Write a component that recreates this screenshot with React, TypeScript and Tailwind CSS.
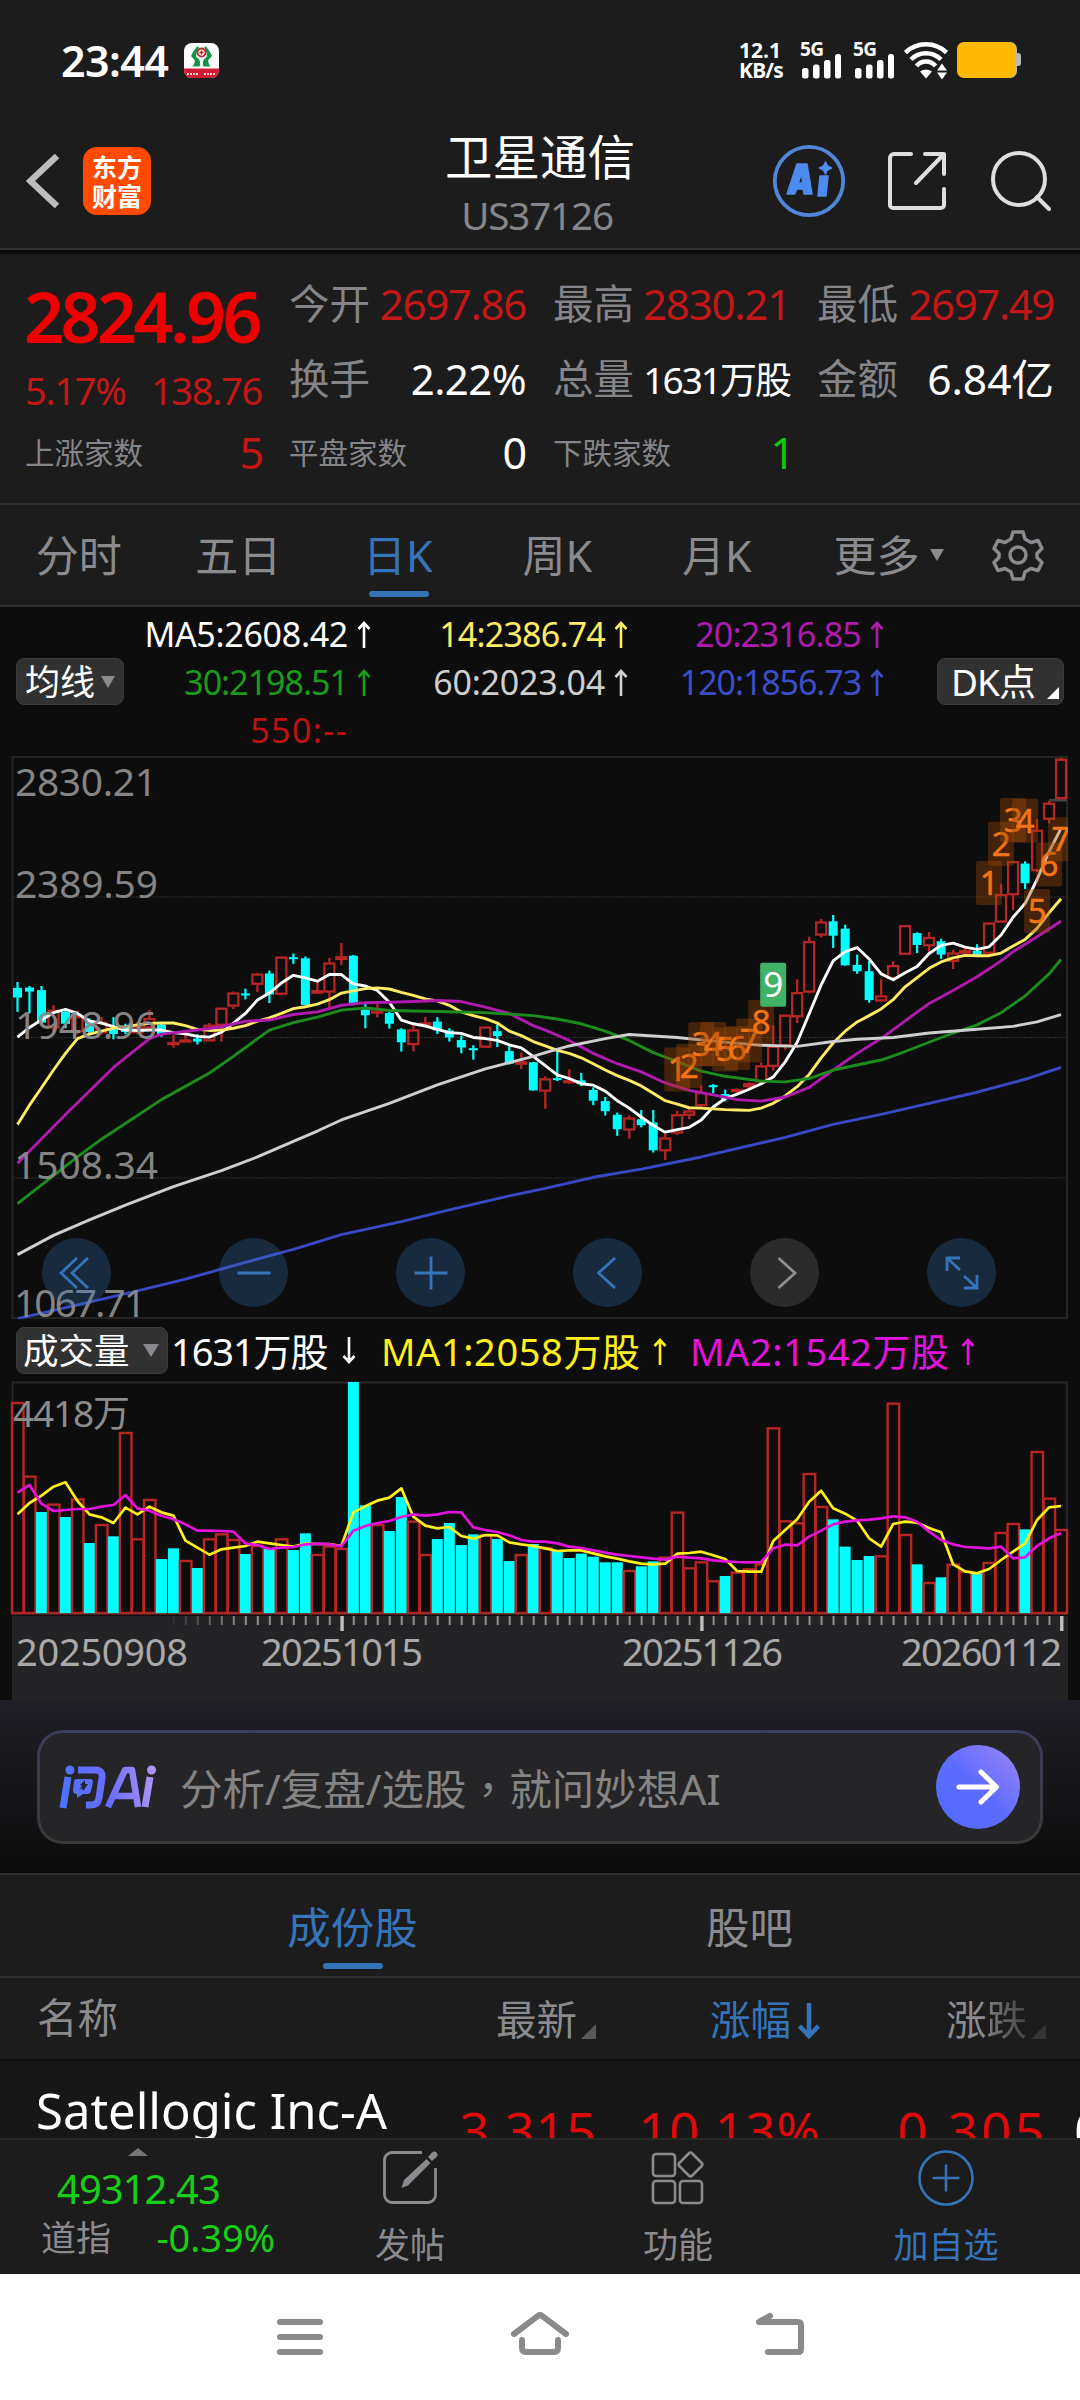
import { ReactNode } from "react";
import clsx from "clsx";

/* ---------- chart geometry ---------- */
const STEP = 11.995;
const cx = (i: number) => 17.5 + i * STEP;
const py = (v: number) => v / 2.703 - 6; // price pane, origin at 756
const vy = (v: number) => v / 3 - 61; // volume pane, origin at 1381

// [up, high, bodyTop, bodyBottom, low]
const CANDLES: number[][] = [
  [0, 627, 643, 669, 708], [0, 638, 642, 653, 712], [0, 638, 649, 737, 742], [1, 690, 703, 752, 762],
  [0, 700, 708, 740, 752], [1, 705, 720, 762, 768], [0, 725, 735, 762, 770], [1, 722, 735, 765, 770],
  [0, 722, 755, 768, 782], [0, 740, 748, 762, 768], [1, 735, 748, 765, 768], [1, 703, 725, 752, 758],
  [0, 738, 742, 768, 775], [1, 770, 790, 795, 805], [1, 765, 783, 786, 788], [0, 768, 780, 788, 796],
  [1, 738, 743, 787, 788], [1, 697, 697, 745, 788], [1, 653, 656, 693, 700], [0, 645, 658, 662, 674],
  [1, 603, 605, 634, 655], [0, 596, 604, 661, 684], [1, 558, 559, 661, 662], [0, 550, 560, 565, 578],
  [0, 558, 563, 689, 690], [1, 622, 650, 658, 660], [1, 562, 575, 655, 697], [1, 522, 558, 567, 582],
  [0, 554, 556, 689, 690], [0, 682, 702, 717, 752], [1, 683, 705, 708, 723], [0, 705, 711, 740, 753],
  [0, 752, 755, 790, 815], [1, 745, 756, 797, 815], [1, 722, 737, 743, 750], [0, 722, 734, 758, 768],
  [0, 752, 758, 777, 788], [0, 772, 784, 804, 820], [0, 798, 806, 809, 837], [1, 748, 748, 804, 806],
  [0, 742, 760, 773, 803], [0, 798, 814, 848, 850], [1, 818, 842, 850, 862], [0, 843, 844, 920, 921],
  [1, 882, 888, 923, 970], [0, 813, 887, 891, 895], [1, 863, 893, 900, 902], [0, 873, 893, 903, 908],
  [0, 912, 919, 948, 960], [0, 938, 949, 976, 988], [0, 980, 986, 1025, 1043], [1, 988, 994, 1028, 1050],
  [0, 973, 998, 1014, 1020], [0, 973, 1007, 1082, 1088], [1, 1038, 1048, 1084, 1108], [1, 975, 985, 1036, 1040],
  [1, 968, 975, 988, 998], [1, 907, 925, 962, 968], [0, 903, 906, 909, 928], [0, 918, 930, 943, 950],
  [1, 915, 917, 923, 930], [1, 898, 901, 911, 918], [1, 845, 853, 898, 905], [1, 743, 800, 856, 867],
  [1, 716, 716, 800, 810], [1, 620, 655, 722, 738], [1, 505, 517, 655, 658], [1, 457, 464, 501, 507],
  [0, 446, 463, 502, 535], [0, 472, 483, 582, 583], [0, 553, 581, 598, 605], [0, 570, 598, 676, 683],
  [1, 620, 664, 679, 680], [1, 570, 582, 618, 622], [1, 473, 474, 553, 554], [0, 493, 495, 527, 549],
  [1, 492, 506, 530, 545], [0, 510, 517, 553, 565], [1, 540, 548, 572, 592], [1, 535, 541, 550, 553],
  [0, 525, 543, 553, 560], [1, 467, 467, 550, 553], [1, 363, 390, 466, 467], [1, 301, 301, 392, 433],
  [0, 301, 307, 360, 376], [1, 187, 216, 327, 330], [1, 138, 143, 188, 199], [1, 20, 24, 132, 134],
];

const MA5 = [
  776, 750, 730, 710, 701, 712, 733, 738, 748, 757, 758, 757, 757, 764, 767, 774, 776, 763, 738, 712, 676, 657,
  630, 609, 616, 625, 607, 607, 632, 638, 650, 682, 730, 740, 746, 755, 764, 766, 777, 780, 785, 797, 805, 828,
  853, 878, 888, 902, 906, 922, 948, 968, 992, 1015, 1033, 1026, 1020, 1000, 965, 942, 930, 917, 902, 884, 843,
  790, 713, 635, 570, 545, 534, 565, 605, 621, 602, 585, 550, 528, 522, 533, 539, 532, 500, 452, 415, 350, 275, 212,
];
const MA14 = [
  1012, 960, 913, 865, 820, 780, 768, 760, 752, 748, 743, 739, 738, 738, 745, 755, 758, 757, 752, 745, 733, 724,
  712, 699, 694, 687, 675, 657, 651, 645, 643, 646, 655, 663, 673, 678, 690, 708, 718, 726, 738, 760, 772, 788,
  800, 812, 820, 832, 848, 865, 880, 893, 908, 928, 948, 957, 967, 968, 970, 972, 973, 974, 968, 955, 935, 910,
  877, 832, 792, 760, 735, 718, 700, 675, 640, 615, 590, 573, 562, 555, 556, 556, 549, 530, 512, 482, 440, 402,
];
const MA20 = [
  [0, 1117], [4, 985], [8, 858], [11, 780], [12, 768], [15, 757], [17, 748], [19, 733], [21, 730], [23, 715],
  [25, 708], [27, 690], [29, 683], [31, 682], [33, 680], [35, 677], [37, 680], [39, 695], [41, 712], [43, 745],
  [44, 757], [46, 785], [48, 820], [50, 848], [52, 870], [54, 900], [56, 920], [58, 932], [60, 945], [62, 949],
  [64, 938], [66, 912], [68, 865], [70, 820], [72, 780], [74, 732], [76, 685], [78, 650], [80, 613], [82, 570],
  [83, 545], [84, 525], [85, 505], [87, 462],
];
const MA30 = [
  [0, 1226], [5, 1100], [7, 1052], [12, 945], [16, 873], [18, 828], [21, 757], [23, 737], [25, 722], [27, 703],
  [29, 697], [31, 704], [35, 707], [39, 710], [43, 718], [45, 727], [47, 740], [49, 760], [51, 785], [53, 818],
  [55, 842], [57, 868], [59, 882], [62, 895], [64, 897], [66, 888], [68, 865], [72, 838], [74, 815], [76, 790],
  [78, 765], [80, 743], [82, 710], [84, 665], [86, 605], [87, 566],
];
const MA60 = [
  [0, 1364], [3, 1312], [6, 1270], [9, 1230], [13, 1180], [17, 1137], [20, 1100], [23, 1058], [25, 1030],
  [27, 1000], [31, 955], [35, 905], [39, 862], [43, 828], [44, 818], [46, 800], [49, 780], [51, 769], [55, 777],
  [58, 787], [62, 798], [65, 801], [68, 788], [70, 782], [73, 777], [76, 765], [80, 755], [83, 747], [85, 735],
  [87, 715],
];
const MA120 = [
  [0, 1537], [5, 1500], [10, 1462], [14, 1430], [19, 1385], [23, 1350], [27, 1310], [32, 1275], [36, 1243],
  [41, 1205], [44, 1185], [48, 1155], [52, 1133], [57, 1100], [64, 1047], [68, 1012], [72, 985], [76, 955],
  [80, 925], [84, 890], [87, 858],
];

const VOLUME = [
  246, 467, 576, 551, 591, 535, 669, 612, 649, 336, 655, 537, 717, 685, 720, 744, 655, 640, 657, 702, 675, 686,
  655, 690, 640, 702, 677, 684, 186, 556, 612, 633, 531, 602, 702, 657, 609, 675, 643, 643, 657, 723, 702, 672,
  681, 692, 714, 701, 710, 727, 727, 750, 739, 724, 710, 575, 742, 724, 781, 768, 755, 745, 730, 322, 601, 607,
  459, 558, 598, 680, 720, 708, 706, 248, 642, 733, 786, 772, 731, 752, 760, 726, 636, 609, 628, 393, 533, 627,
];
const FALLING = new Set([
  2, 4, 6, 8, 12, 13, 15, 19, 21, 23, 24, 28, 29, 31, 32, 35, 36, 37, 38, 40, 41, 43, 45, 46, 47, 48, 49, 50, 52,
  53, 59, 68, 69, 70, 71, 75, 77, 80, 84,
]);
const VMA1 = [
  583, 549, 527, 500, 487, 543, 583, 592, 609, 563, 583, 560, 577, 587, 662, 683, 704, 688, 683, 678, 665, 670,
  675, 680, 671, 672, 672, 678, 577, 559, 542, 533, 505, 590, 617, 625, 621, 648, 656, 645, 646, 667, 673, 678,
  685, 693, 691, 691, 700, 709, 716, 724, 731, 733, 731, 701, 699, 695, 706, 717, 753, 755, 755, 663, 630, 598,
  545, 512, 565, 581, 602, 655, 680, 612, 605, 608, 624, 637, 733, 754, 760, 747, 720, 695, 670, 600, 562, 558,
];
const VMA2 = [
  518, 495, 551, 573, 570, 567, 567, 560, 555, 525, 565, 572, 587, 598, 613, 632, 632, 633, 635, 670, 675, 687,
  683, 681, 673, 671, 673, 679, 632, 618, 609, 603, 591, 583, 587, 583, 576, 577, 622, 630, 636, 646, 660, 665,
  665, 670, 680, 684, 691, 698, 704, 708, 712, 716, 719, 710, 713, 715, 721, 724, 726, 727, 726, 685, 674, 676,
  650, 632, 613, 605, 601, 599, 595, 589, 592, 605, 635, 660, 673, 681, 683, 685, 680, 715, 712, 678, 655, 639,
];

// [candle index, box top, digit]
const MARKS: [number, number, string][] = [
  [55, 804, "1"], [56, 795, "2"], [57, 736, "3"], [58, 735, "4"], [59, 750, "5"], [60, 746, "6"], [61, 726, "7"],
  [62, 676, "8"], [81, 300, "1"], [82, 194, "2"], [83, 130, "3"], [84, 132, "4"], [85, 376, "5"],
  [86, 250, "6"], [87, 182, "7"],
];

const dense = (a: number[], y: (v: number) => number) => a.map((v, i) => `${cx(i)},${y(v)}`).join(" ");
const sparse = (a: number[][]) => a.map(([i, v]) => `${cx(i)},${py(v)}`).join(" ");

function AxisLabel({ x, y, w, children, fill = "#8c8c8c", size = 39 }: {
  x: number; y: number; w: number; children: string; fill?: string; size?: number;
}) {
  return (
    <text x={x} y={y} textLength={w} fill={fill} fontSize={size}>
      {children}
    </text>
  );
}

function PriceChart() {
  return (
    <svg width="1080" height="564" viewBox="0 0 1080 564" className="block">
      <defs>
        <clipPath id="pane">
          <rect x="12" y="0" width="1056" height="563" />
        </clipPath>
      </defs>
      <rect x="12.5" y="1" width="1054.5" height="561" fill="none" stroke="#242424" strokeWidth="2" />
      {[141, 281.5, 422].map((y) => (
        <line key={y} x1="13" x2="1067" y1={y} y2={y} stroke="#2e2e2e" strokeWidth="1" strokeDasharray="2 1" />
      ))}
      <g clipPath="url(#pane)">
        <rect x="1049" y="43" width="18" height="2.5" fill="#444" />
        {CANDLES.map(([up, h, t, b, l], i) => {
          const x = cx(i);
          const top = py(t);
          const bot = Math.max(py(b), top + 2);
          return up ? (
            <g key={i} stroke="#b82525" strokeWidth="2.3" fill="none">
              <path d={`M${x} ${py(h)}V${top}M${x} ${bot}V${py(l)}`} />
              <rect x={x - 5} y={top + 0.8} width="10" height={Math.max(bot - top - 1.6, 1)} />
            </g>
          ) : (
            <g key={i} fill="#00ffff">
              <rect x={x - 1.1} y={py(h)} width="2.2" height={py(l) - py(h)} />
              <rect x={x - 4.5} y={top} width="9" height={bot - top} />
            </g>
          );
        })}
        <g fill="none" strokeWidth="2.9" strokeLinejoin="round">
          <polyline points={dense(MA5, py)} stroke="#ffffff" />
          <polyline points={dense(MA14, py)} stroke="#ffec63" />
          <polyline points={sparse(MA20)} stroke="#b01aae" />
          <polyline points={sparse(MA30)} stroke="#1c8c1c" />
          <polyline points={sparse(MA60)} stroke="#cfcfcf" />
          <polyline points={sparse(MA120)} stroke="#3949c4" />
        </g>
        {MARKS.map(([i, top, n]) => (
          <g key={i}>
            <rect x={cx(i) - 13} y={py(top)} width="26" height="44" rx="2" fill="#9a4508" fillOpacity="0.4" />
            <text x={cx(i)} y={py(top) + 34} textAnchor="middle" fontSize="33" fill="#f47414" stroke="#f47414" strokeWidth="0.5">
              {n}
            </text>
          </g>
        ))}
        <rect x={cx(63) - 13} y={py(575)} width="26" height="44" rx="2" fill="#3fb268" />
        <text x={cx(63)} y={py(575) + 34.5} textAnchor="middle" fontSize="35" fill="#fff">
          9
        </text>
      </g>
      <g fillOpacity="0.95">
        <AxisLabel x={15} y={40} w={142}>2830.21</AxisLabel>
        <AxisLabel x={15} y={142} w={143}>2389.59</AxisLabel>
        <AxisLabel x={15} y={282.5} w={142}>1948.96</AxisLabel>
        <AxisLabel x={14} y={422.5} w={144}>1508.34</AxisLabel>
        <AxisLabel x={14} y={560.5} w={132}>1067.71</AxisLabel>
      </g>
    </svg>
  );
}

function VolumeChart() {
  return (
    <svg width="1080" height="319" viewBox="0 0 1080 319" className="block">
      <path d="M12.5 234V1.5H1067V234" fill="none" stroke="#262626" strokeWidth="2" />
      <rect x="12" y="235" width="1056" height="84" fill="#242426" />
      {VOLUME.map((v, i) =>
        FALLING.has(i) ? (
          <rect key={i} x={cx(i) - 5.5} y={vy(v)} width="11" height={232.5 - vy(v)} fill="#00ffff" />
        ) : (
          <rect
            key={i}
            x={cx(i) - 5.5}
            y={vy(v) + 1}
            width="11.5"
            height={231 - vy(v)}
            fill="none"
            stroke="#b82525"
            strokeWidth="2.4"
          />
        )
      )}
      <rect x="12" y="232" width="1055" height="1.6" fill="#8f2f2f" fillOpacity="0.7" />
      <g fill="none" strokeWidth="2.7" strokeLinejoin="round">
        <polyline points={dense(VMA1, vy)} stroke="#ffef1f" />
        <polyline points={dense(VMA2, vy)} stroke="#e312dc" />
      </g>
      <AxisLabel x={13} y={45.5} w={117} size={37}>4418万</AxisLabel>
      {VOLUME.map((_, i) => {
        if (i < 13) return null;
        const major = i === 27 || i === 57 || i === 87;
        return (
          <rect
            key={i}
            x={cx(i) - (major ? 1 : 0.6)}
            y="235"
            width={major ? 3.4 : 2}
            height={major ? 15 : 9}
            fill={major ? "#bdbdbd" : "#8f8f8f"}
            opacity={Math.min(1, (i - 12) / 7)}
          />
        );
      })}
      <AxisLabel x={16} y={285} w={172} fill="#a9a9a9" size={38}>20250908</AxisLabel>
      <AxisLabel x={261} y={285} w={162} fill="#a9a9a9" size={38}>20251015</AxisLabel>
      <AxisLabel x={622} y={285} w={161} fill="#a9a9a9" size={38}>20251126</AxisLabel>
      <AxisLabel x={901} y={285} w={161} fill="#a9a9a9" size={38}>20260112</AxisLabel>
    </svg>
  );
}

/* ---------- small pieces ---------- */
function Arrow({ down = false, className }: { down?: boolean; className?: string }) {
  return (
    <svg width="14" height="28" viewBox="0 0 14 28" className={clsx("shrink-0", down && "rotate-180", className)}>
      <path d="M7 28V3M1.5 9L7 3l5.5 6" fill="none" stroke="currentColor" strokeWidth="2.600" />
    </svg>
  );
}

function Signal() {
  return (
    <div className="ml-[12px] flex w-[41px] flex-col">
      <span className="text-[19px] leading-[14px] font-bold tracking-[-0.5px]">5G</span>
      <svg width="41" height="25" viewBox="0 0 41 25" className="mt-[-2px] block" fill="#fff">
        <rect x="2" y="14" width="6.5" height="10.500" rx="2.5" />
        <rect x="13" y="10.500" width="6.500" height="14" rx="2.5" />
        <rect x="24" y="6" width="6.500" height="18.500" rx="2.5" />
        <rect x="35" y="0" width="6" height="24.500" rx="2.5" />
      </svg>
    </div>
  );
}

function StatusBar() {
  return (
    <div className="flex h-[120px] items-center pr-[59px] pl-[61px] text-white">
      <span className="text-[43px] leading-none font-semibold tracking-[-0.6px]">23:44</span>
      <svg width="35" height="35" viewBox="0 0 35 35" className="ml-[16px]">
        <rect width="35" height="35" rx="8" fill="#fff" />
        <path d="M0 25.500H35V27a8 8 0 0 1-8 8H8a8 8 0 0 1-8-8z" fill="#d01c34" />
        <path d="M13 3.500Q9 8 7 13l4 4.500q-.500 4-2.500 6h7q2.500-5.500-3.500-10Q12 9 15 4zM22 3.500q4 4.500 6 9.500l-4 4.500q.5 4 2.500 6h-7q-2.500-5.500 3.500-10Q23 9 20 4z" fill="#0e9648" />
        <circle cx="17.500" cy="9.500" r="4" fill="#fff" stroke="#c8202c" strokeWidth="1.800" />
        <path d="M15.500 9.500h4M17.500 7.500v4" stroke="#c8202c" strokeWidth="1.500" />
        <path d="M3 31h11M20 31h12" stroke="#fff" strokeWidth="2" strokeDasharray="2 1" opacity="0.8" />
      </svg>
      <div className="ml-auto flex items-center">
        <div className="flex w-[49px] flex-col text-[21px] leading-[20px] font-bold">
          <span>12.1</span>
          <span className="tracking-[-0.8px]">KB/s</span>
        </div>
        <Signal />
        <Signal />
        <svg width="44" height="37" viewBox="0 0 44 37" className="ml-[10px]">
          <g fill="none" stroke="#fff" strokeWidth="4.500">
            <path d="M1.500 10.500C13-.5 31-.5 42.500 10.500" />
            <path d="M7 17.500C15 9 29 9 37 17.500" />
            <path d="M12.500 24C17.500 18 26.500 18 31.500 24" />
          </g>
          <path d="M16 29.500q6-4 12 0L22 36.500z" fill="#fff" />
          <path d="M33 28.500l5-7 5 7zM33 30.500h10l-5 7z" fill="#fff" />
        </svg>
        <svg width="64" height="36" viewBox="0 0 64 36" className="ml-[9px]">
          <path d="M50 0h3a7 7 0 0 1 7 7v4h1a3 3 0 0 1 3 3v7a3 3 0 0 1-3 3h-1v5a7 7 0 0 1-7 7h-3z" fill="#b9b9b9" />
          <rect width="58.500" height="36" rx="7" fill="#ffb800" />
        </svg>
      </div>
    </div>
  );
}

function Header() {
  return (
    <div className="grid h-[130px] grid-cols-[1fr_auto_1fr] border-b-2 border-[#333] pb-[6px]">
      <div className="flex items-center pl-[26px]">
        <svg width="34" height="56" viewBox="0 0 34 56">
          <path d="M31 3L4.500 28 31 53" fill="none" stroke="#bdbdbd" strokeWidth="6.500" />
        </svg>
        <div className="ml-[23px] flex h-[68px] w-[68px] flex-col items-center justify-center rounded-[14px] bg-[#ff4a00] font-['Noto_Sans_CJK_SC'] text-[25px] leading-[29px] font-bold text-white">
          <span>东方</span>
          <span>财富</span>
        </div>
      </div>
      <div className="flex flex-col items-center pt-[9px]">
        <h1 className="text-[47.5px] leading-[56px] text-white">卫星通信</h1>
        <span className="mt-[8px] pr-[6px] text-[38.5px] leading-[44px] tracking-[-1.1px] text-[#87878b]">US37126</span>
      </div>
      <div className="flex items-center justify-end pr-[29px]">
        <svg width="74" height="74" viewBox="0 0 74 74">
          <circle cx="37" cy="37" r="34.200" fill="none" stroke="#5085d8" strokeWidth="3.800" />
          <g fill="#4d8bf0" stroke="#4d8bf0" strokeWidth="1.500" strokeLinejoin="round">
            <path fillRule="evenodd" d="M25 20h10l5 30h-8l-.8-5h-6.500l-2 5H15zM29.500 29l-3.200 10h4.400z" />
            <path d="M48 32h8l-2 20h-8z" />
            <path d="M53.500 18l2 4 4 2-4 2-2 4-2-4-4-2 4-2z" />
          </g>
        </svg>
        <svg width="60" height="60" viewBox="0 0 60 60" className="ml-[42px]">
          <g fill="none" stroke="#dedede" strokeWidth="4" strokeLinecap="round" strokeLinejoin="round">
            <path d="M23 3H6a4 4 0 0 0-4 4v47a3 3 0 0 0 3 3h48a3 3 0 0 0 3-3V38" />
            <path d="M37 3h19v20M56 3L28 32" />
          </g>
        </svg>
        <svg width="60" height="60" viewBox="0 0 60 60" className="ml-[43px]">
          <g fill="none" stroke="#dedede" strokeWidth="4" strokeLinecap="round">
            <circle cx="28" cy="28" r="26" />
            <path d="M46 46l12 12" />
          </g>
        </svg>
      </div>
    </div>
  );
}

function Quote({ label, value, className }: { label: string; value: string; className: string }) {
  return (
    <div className="flex h-[60px] items-center justify-between whitespace-nowrap">
      <span className="text-[40.500px] leading-none text-[#858589]">{label}</span>
      <span className={clsx("leading-none", className)}>{value}</span>
    </div>
  );
}

function Count({ label, value, className }: { label: string; value: string; className: string }) {
  return (
    <div className="flex items-center justify-between">
      <span className="text-[29.5px] leading-none text-[#858589]">{label}</span>
      <span className={clsx("text-[43px] leading-none", className)}>{value}</span>
    </div>
  );
}

function Quotes() {
  return (
    <div className="h-[253px] border-t-4 border-[#0b0b0b] px-[25px] pt-[15px]">
      <div className="grid grid-cols-[237px_237px_237px_237px] gap-x-[27px]">
        <div className="flex h-[145px] flex-col whitespace-nowrap">
          <span className="mt-[7px] ml-[-1px] text-[70px] leading-[80px] font-semibold tracking-[-3.5px] text-[#ee0000]">2824.96</span>
          <div className="mt-[12px] flex justify-between text-[38px] leading-[44px] tracking-[-1.3px] text-[#c31616]">
            <span>5.17%</span>
            <span>138.76</span>
          </div>
        </div>
        <div className="flex flex-col gap-[15px] pt-[5px]">
          <Quote label="今开" value="2697.86" className="text-[42px] tracking-[-1.3px] text-[#c31616]" />
          <Quote label="换手" value="2.22%" className="text-[42px] tracking-[-0.6px] text-white" />
        </div>
        <div className="flex flex-col gap-[15px] pt-[5px]">
          <Quote label="最高" value="2830.21" className="text-[42px] tracking-[-1.2px] text-[#c31616]" />
          <Quote label="总量" value="1631万股" className="text-[37px] tracking-[-2px] text-white" />
        </div>
        <div className="flex flex-col gap-[15px] pt-[5px]">
          <Quote label="最低" value="2697.49" className="text-[42px] tracking-[-1.4px] text-[#c31616]" />
          <Quote label="金额" value="6.84亿" className="text-[42.500px] text-white" />
        </div>
      </div>
      <div className="mt-[17px] grid grid-cols-[237px_237px_237px_237px] gap-x-[27px]">
        <Count label="上涨家数" value="5" className="mr-[-2px] text-[#c31616]" />
        <Count label="平盘家数" value="0" className="mr-[-1px] text-white" />
        <Count label="下跌家数" value="1" className="mr-[-5px] text-[#0fc80f]" />
      </div>
    </div>
  );
}

function PeriodTabs() {
  return (
    <div className="flex h-[104px] border-t-2 border-b-2 border-[#2f2f2f] text-[43px] leading-none text-[#8b8b8f]">
      {["分时", "五日", "日K", "周K", "月K"].map((t) => (
        <div
          key={t}
          className={clsx("flex w-[159.5px] flex-col items-center pt-[29px]", t === "日K" && "text-[#3574b9]")}
        >
          <span className="pr-[2px]">{t}</span>
          {t === "日K" && <i className="mt-[14px] h-[6px] w-[60px] rounded-full bg-[#3574b9]" />}
        </div>
      ))}
      <div className="flex items-center pl-[36px]">
        <span>更多</span>
        <svg width="14" height="12" viewBox="0 0 14 12" className="ml-[10px]">
          <path d="M0 0h14L7 12z" fill="#8b8b8f" />
        </svg>
        <svg width="52" height="52" viewBox="0 0 52 52" className="ml-[48px]">
          <g fill="none" stroke="#8b8b8f" strokeWidth="3.500" strokeLinejoin="round">
            <path d="M21 3h10l2 7 6 3.500 7-2 4 8-5 5v4l5 5-4 8-7-2-6 3.500-2 7H21l-2-7-6-3.500-7 2-4-8 5-5v-4l-5-5 4-8 7 2 6-3.500z" />
            <circle cx="26" cy="26" r="8" />
          </g>
        </svg>
      </div>
    </div>
  );
}

function MaValue({ value, up = true, className }: { value: string; up?: boolean; className: string }) {
  return (
    <div className={clsx("flex h-[48px] items-center justify-end", className)}>
      <span>{value}</span>
      {up ? <Arrow className="mr-[3px] ml-[9px]" /> : <span className="w-[26px]" />}
    </div>
  );
}

function Averages() {
  return (
    <div className="flex h-[149px] pr-[16px] pl-[16px]">
      <div className="mt-[51px] flex h-[47px] w-[108px] items-center rounded-[8px] border border-[#3b3b3b] bg-[#313131] pl-[8px] text-[35px] leading-none text-white">
        均线
        <svg width="14" height="12" viewBox="0 0 14 12" className="ml-[6px]">
          <path d="M0 0h14L7 12z" fill="#8b8b8f" />
        </svg>
      </div>
      <div className="grid grid-cols-[250px_257px_256px] content-start pt-[3px] text-[34px] leading-none">
        <MaValue value="MA5:2608.42" className="tracking-[-0.3px] text-white" />
        <MaValue value="14:2386.74" className="tracking-[-0.8px] text-[#ffec63]" />
        <MaValue value="20:2316.85" className="tracking-[-0.8px] text-[#b01aae]" />
        <MaValue value="30:2198.51" className="tracking-[-1px] text-[#1c9a1c]" />
        <MaValue value="60:2023.04" className="tracking-[-0.2px] text-[#cfcfcf]" />
        <MaValue value="120:1856.73" className="tracking-[-1.1px] text-[#3c4dc8]" />
        <MaValue value="550:--" up={false} className="tracking-[1.4px] text-[#bd1212]" />
      </div>
      <div className="mt-[51px] ml-auto flex h-[47px] w-[127px] items-center rounded-[8px] border border-[#3b3b3b] bg-[#313131] pl-[13px] text-[37px] leading-none tracking-[-1px] text-white">
        DK点
        <svg width="12" height="12" viewBox="0 0 12 12" className="mt-[22px] ml-[12px]">
          <path d="M12 0v12H0z" fill="#fff" />
        </svg>
      </div>
    </div>
  );
}

function RoundButton({ children, muted = false }: { children: ReactNode; muted?: boolean }) {
  return (
    <button
      className={clsx(
        "flex h-[69px] w-[69px] items-center justify-center rounded-full",
        muted ? "bg-[#2b2b2b] text-[#8f8f8f]" : "bg-[#3578c0]/28 text-[#3574b9]"
      )}
    >
      <svg width="36" height="36" viewBox="0 0 36 36" fill="none" stroke="currentColor" strokeWidth="2.800">
        {children}
      </svg>
    </button>
  );
}

function PricePane() {
  return (
    <div className="relative h-[564px]">
      <PriceChart />
      <div className="absolute top-[482px] left-[42px] flex w-[954px] justify-between">
        <RoundButton>
          <path d="M18 3L2 18l16 15M29 3L13 18l16 15" />
        </RoundButton>
        <RoundButton>
          <path d="M1.500 18h33" />
        </RoundButton>
        <RoundButton>
          <path d="M1.500 18h33M18 1.500v33" />
        </RoundButton>
        <RoundButton>
          <path d="M25 3L8.500 18 25 33" />
        </RoundButton>
        <RoundButton muted>
          <path d="M11.500 3L28 18 11.500 33" />
        </RoundButton>
        <RoundButton>
          <path d="M3 16V3h13M3 3l13 12M33 20v13H20M33 33L20 21" />
        </RoundButton>
      </div>
    </div>
  );
}

function VolumeHeader() {
  return (
    <div className="flex h-[61px] items-center pl-[16px] text-[38px] leading-none whitespace-nowrap">
      <div className="flex h-[47px] w-[152px] items-center rounded-[8px] border border-[#3b3b3b] bg-[#313131] pl-[6px] text-[35.5px] text-white">
        成交量
        <svg width="16" height="13" viewBox="0 0 16 13" className="ml-[13px]">
          <path d="M0 0h16L8 13z" fill="#8b8b8f" />
        </svg>
      </div>
      <div className="flex w-[211px] items-center pl-[3px] tracking-[-1.1px] text-white">
        1631万股
        <Arrow down className="ml-[15px]" />
      </div>
      <div className="flex w-[310px] items-center pl-[2px] tracking-[0.6px] text-[#ffef1f]">
        MA1:2058万股
        <Arrow className="ml-[12px]" />
      </div>
      <div className="flex items-center pl-[1px] tracking-[0.6px] text-[#e312dc]">
        MA2:1542万股
        <Arrow className="ml-[11px]" />
      </div>
    </div>
  );
}

function AskBar() {
  return (
    <div className="h-[173px] bg-linear-to-b from-[#201f26] to-[#0c0c0c] px-[37px] pt-[30px]">
      <div className="h-[114px] rounded-[26px] bg-linear-to-b from-[#3b3d5c] to-[#3b3837] p-[3px]">
        <div className="flex h-full items-center rounded-[23px] bg-[#252527] pr-[20px] pl-[19px]">
          <svg width="98" height="44" viewBox="0 0 98 44">
            <defs>
              <linearGradient id="ask" gradientUnits="userSpaceOnUse" x1="0" y1="30" x2="98" y2="10">
                <stop offset="0" stopColor="#4a73ff" />
                <stop offset="0.5" stopColor="#6a6dff" />
                <stop offset="1" stopColor="#b597f5" />
              </linearGradient>
            </defs>
            <g fill="none" stroke="url(#ask)" strokeWidth="7" strokeLinejoin="round">
              <path d="M9 12L4 43" />
              <path d="M19 5h17q8 0 7 8l-3 20q-1 7-8 7h-5" />
              <path d="M49 42L66 5h7l6 37M56 31h20" strokeWidth="6.500" />
              <path d="M91 12l-5 30" />
            </g>
            <circle cx="11" cy="5" r="4.500" fill="url(#ask)" />
            <circle cx="92.500" cy="5" r="4.500" fill="url(#ask)" />
            <path d="M18 14h13a3 3 0 0 1 3 3l-2 9a4 4 0 0 1-4 3h-4l-6 4v-4q-4 0-4-4l1-8a3 3 0 0 1 3-3z" fill="url(#ask)" />
            <path d="M20 25l3-4-2-1 5-5v4l3 0-5 7-1-3z" fill="#252527" />
          </svg>
          <span className="mt-[3px] ml-[23px] text-[42.500px] leading-none whitespace-nowrap text-[#848484]">
            分析/复盘/选股<span className="font-['Noto_Sans_CJK_TC']">，</span>就问妙想AI
          </span>
          <div className="ml-auto flex h-[84px] w-[84px] items-center justify-center rounded-full bg-linear-to-tr from-[#4c6dff] via-[#5f6bff] to-[#9c86f4]">
            <svg width="44" height="38" viewBox="0 0 44 38">
              <path d="M3 19h37M25 4l15.500 15L25 34" fill="none" stroke="#fff" strokeWidth="5" strokeLinecap="round" strokeLinejoin="round" />
            </svg>
          </div>
        </div>
      </div>
    </div>
  );
}

function Corner({ className }: { className?: string }) {
  return (
    <svg width="15" height="15" viewBox="0 0 15 15" className={className}>
      <path d="M15 0v15H0z" fill="#5a5a5c" />
    </svg>
  );
}

function Constituents() {
  return (
    <>
      <div className="flex h-[105px] border-t-2 border-b-2 border-[#2f2f2f] pl-[154px] text-[43.5px] leading-none text-[#8b8b8f]">
        <div className="flex w-[397px] flex-col items-center pt-[31px] text-[#3574b9]">
          成份股
          <i className="mt-[13px] h-[6px] w-[60px] rounded-full bg-[#3574b9]" />
        </div>
        <div className="flex w-[397px] flex-col items-center pt-[31px]">股吧</div>
      </div>
      <div className="flex h-[81px] items-center pl-[37px] text-[40.5px] leading-none text-[#8b8b8f]">
        <span className="w-[459px]">名称</span>
        <div className="flex w-[214px] items-center pt-[4px]">
          最新
          <Corner className="mt-[21px] ml-[4px]" />
        </div>
        <div className="flex w-[236px] items-center pt-[4px] text-[#3574b9]">
          涨幅
          <svg width="22" height="36" viewBox="0 0 22 36" className="ml-[7px]">
            <path d="M11 0v33M1.500 23L11 33l9.500-10" fill="none" stroke="currentColor" strokeWidth="4.500" />
          </svg>
        </div>
        <div className="flex items-center pt-[4px]">
          涨<span className="bg-linear-to-r from-[#7c7c80] to-[#444446] bg-clip-text text-transparent">跌</span>
          <Corner className="mt-[21px] ml-[4px] opacity-40" />
        </div>
      </div>
      <div className="flex h-[79px] overflow-hidden border-t-2 border-[#121212] bg-[#171717] text-[53px] leading-[72px] whitespace-nowrap text-[#dc0a0a]">
        <span className="w-[423px] shrink-0 pt-[13px] pl-[36px] text-[49px] text-white">Satellogic Inc-A</span>
        <span className="w-[174px] shrink-0 pt-[34px] text-right tracking-[0.4px]">3.315</span>
        <span className="w-[224px] shrink-0 pt-[34px] text-right tracking-[0.5px]">10.13%</span>
        <span className="w-[227px] shrink-0 pt-[34px] text-right tracking-[3px]">0.305</span>
        <span className="shrink-0 pt-[34px] pl-[26px] text-white">0</span>
      </div>
    </>
  );
}

function BottomBar() {
  return (
    <div className="flex h-[136px] border-t-2 border-[#282828] text-[35px] leading-none text-[#8b8b8f]">
      <div className="flex w-[276px] flex-col">
        <svg width="20" height="8" viewBox="0 0 20 8" className="mt-[8px] ml-[128px]">
          <path d="M10 0l10 8H0z" fill="#77777a" />
        </svg>
        <span className="mt-[13px] ml-[57px] text-[40px] tracking-[-1px] text-[#17cf17]">49312.43</span>
        <div className="mt-[9px] flex items-center justify-between pr-[1px] pl-[41px]">
          <span>道指</span>
          <span className="text-[38px] tracking-[-0.1px] text-[#17cf17]">-0.39%</span>
        </div>
      </div>
      <div className="flex w-[268px] flex-col items-center pt-[10px]">
        <svg width="56" height="56" viewBox="0 0 56 56">
          <path d="M40 2.500H10a7.500 7.500 0 0 0-7.500 7.500v35a7.500 7.500 0 0 0 7.500 7.500h36a7.500 7.500 0 0 0 7.500-7.500V18" fill="none" stroke="#8b8b8f" strokeWidth="2.800" />
          <path d="M19.500 38l2.500-8 22.500-21 4 4L26 35.500zM46 7l4-4.500a3 3 0 0 1 4.500 4.500L50 11z" fill="#8b8b8f" />
        </svg>
        <span className="mt-[21px]">发帖</span>
      </div>
      <div className="flex w-[268px] flex-col items-center pt-[10px]">
        <svg width="56" height="56" viewBox="0 0 56 56" fill="none" stroke="#8b8b8f" strokeWidth="2.600">
          <rect x="3" y="4" width="22" height="22" rx="3" />
          <rect x="3" y="31" width="22" height="22" rx="3" />
          <rect x="30" y="31" width="22" height="22" rx="3" />
          <rect x="31.500" y="5.500" width="18" height="18" rx="2.500" transform="rotate(45 40.500 14.500)" />
        </svg>
        <span className="mt-[21px]">功能</span>
      </div>
      <div className="flex w-[268px] flex-col items-center pt-[10px] text-[#3574b9]">
        <svg width="56" height="56" viewBox="0 0 56 56" fill="none" stroke="currentColor" strokeWidth="2.600">
          <circle cx="28" cy="28" r="26.500" />
          <path d="M14.500 28h27M28 14.500v27" />
        </svg>
        <span className="mt-[21px]">加自选</span>
      </div>
    </div>
  );
}

function SystemNav() {
  return (
    <div className="flex h-[126px] items-start justify-center gap-[180px] bg-white pt-[33px]">
      <svg width="60" height="56" viewBox="0 0 60 56" stroke="#8a8a8a" strokeWidth="6" strokeLinecap="round">
        <path d="M10 15h40M10 30h40M10 45h40" />
      </svg>
      <svg width="60" height="56" viewBox="0 0 60 56" fill="none" stroke="#8a8a8a" strokeWidth="6" strokeLinecap="round" strokeLinejoin="round">
        <path d="M4 27L28 8.800q2-1.500 4 0L56 27" />
        <path d="M12 33v8q0 4 4 4h28q4 0 4-4v-8" />
      </svg>
      <svg width="60" height="56" viewBox="0 0 60 56" fill="none" stroke="#8a8a8a" strokeWidth="6" strokeLinecap="round" strokeLinejoin="round">
        <path d="M20 9L9 15h39q3 0 3 3v24q0 3-3 3H18" />
      </svg>
    </div>
  );
}

export default function App() {
  return (
    <div className="flex h-[2400px] w-[1080px] flex-col overflow-hidden bg-[#1c1c1c] font-['Noto_Sans','Noto_Sans_CJK_SC',sans-serif]">
      <StatusBar />
      <Header />
      <Quotes />
      <PeriodTabs />
      <div className="bg-[#0d0d0d]">
        <Averages />
        <PricePane />
        <VolumeHeader />
        <VolumeChart />
      </div>
      <AskBar />
      <Constituents />
      <BottomBar />
      <SystemNav />
    </div>
  );
}
